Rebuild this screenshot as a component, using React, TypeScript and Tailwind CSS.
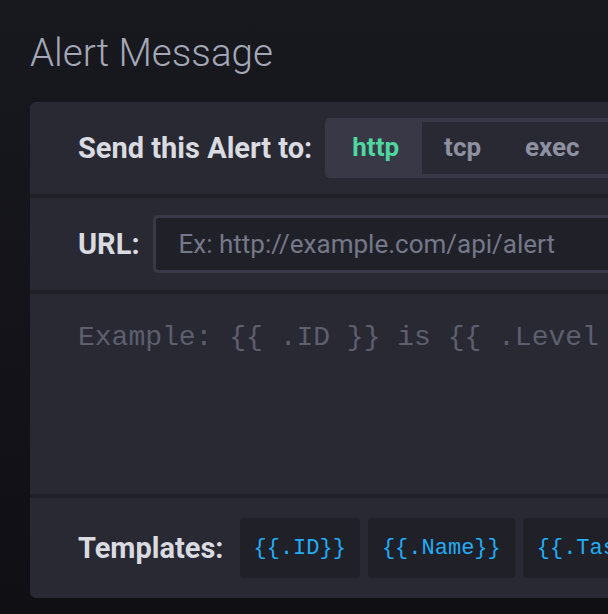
import { useState } from "react"

const handlers = ["http", "tcp", "exec", "log", "smtp", "alerta"]
const templates = ["{{.ID}}", "{{.Name}}", "{{.TaskName}}", "{{.Group}}", "{{.Tags}}"]

export default function App() {
  const [handler, setHandler] = useState("http")
  const [url, setUrl] = useState("")
  const [message, setMessage] = useState("")

  return (
    <div className="w-[608px] h-[614px] overflow-hidden bg-linear-to-b from-[#18181f] to-[#0f0f14] font-['Roboto',sans-serif]">
      <h1 className="ml-[30px] pt-[34px] text-[38.6px] leading-[38px] font-light text-[#a4a8b6]">
        Alert Message
      </h1>

      <section className="mt-[30px] ml-[30px] w-[1400px] flex flex-col gap-[4px] bg-[#202028] rounded-[6px] overflow-hidden">
        {/* handler picker */}
        <div className="h-[92px] flex items-center gap-[13px] pl-[48px] bg-[#292933]">
          <span className="text-[29px] leading-none font-bold text-[#dadbe1]">
            Send this Alert to:
          </span>
          <div className="flex h-[60px] p-[4px] bg-[#383846] rounded-[5px]">
            {handlers.map((h) => (
              <button
                key={h}
                onClick={() => setHandler(h)}
                className={
                  h === handler
                    ? "px-[23px] pb-[2px] text-[26px] leading-none font-bold text-[#4ed8a0] bg-[#383846]"
                    : "px-[22px] pb-[2px] text-[26px] leading-none font-bold text-[#8e91a1] bg-[#292933]"
                }
              >
                {h}
              </button>
            ))}
          </div>
        </div>

        {/* endpoint */}
        <div className="h-[92px] flex items-center gap-[13px] pl-[48px] bg-[#292933]">
          <label htmlFor="alert-url" className="text-[29px] leading-none font-bold text-[#dadbe1]">
            URL:
          </label>
          <input
            id="alert-url"
            type="text"
            value={url}
            onChange={(e) => setUrl(e.target.value)}
            placeholder="Ex: http://example.com/api/alert"
            className="w-[1100px] h-[58px] pl-[23px] text-[26px] text-[#d4d7dd] placeholder:text-[#757888] bg-[#202028] border-[3px] border-[#383846] rounded-[5px] outline-none"
          />
        </div>

        {/* message body */}
        <div className="h-[200px] bg-[#292933]">
          <textarea
            value={message}
            onChange={(e) => setMessage(e.target.value)}
            placeholder={'Example: {{ .ID }} is {{ .Level }} value: {{ index .Fields "value" }}'}
            className="w-full h-full pt-[30px] pl-[48px] resize-none bg-transparent outline-none text-[28px] leading-none font-['Courier_New','Liberation_Mono',monospace] text-[#c6cad3] placeholder:text-[#5d5f6e]"
          />
        </div>

        {/* template chips */}
        <div className="h-[100px] flex items-center gap-[16px] pl-[48px] bg-[#292933]">
          <span className="text-[29px] leading-none font-bold text-[#dadbe1]">Templates:</span>
          <div className="flex gap-[8px]">
            {templates.map((t) => (
              <code
                key={t}
                className="h-[60px] flex items-center px-[14px] bg-[#202028] rounded-[3px] text-[22px] font-['Courier_New','Liberation_Mono',monospace] text-[#22adf6]"
              >
                {t}
              </code>
            ))}
          </div>
        </div>
      </section>
    </div>
  )
}
